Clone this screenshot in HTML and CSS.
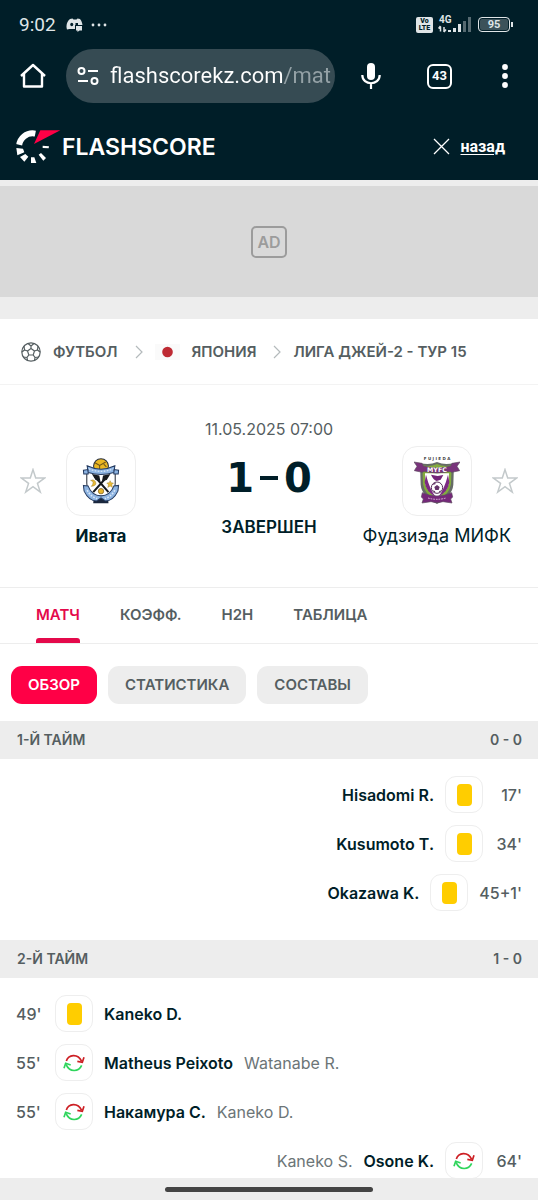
FILE: index.html
```html
<!doctype html>
<html lang="ru">
	<head>
		<meta charset="utf-8">
		<title>Ивата - Фудзиэда МИФК</title>
		<meta name="viewport" content="width=device-width, initial-scale=1.0">
		<link rel="stylesheet" href="styles.css">
	</head>
	<body>
	<svg class="sprite" aria-hidden="true">
		<symbol id="star" viewBox="0 0 24 24">
			<path d="M12 1.5l2.5 7.8h8.2l-6.6 4.9 2.6 8L12 17.3l-6.7 4.900 2.600-8-6.600-4.900h8.200z" fill="none" stroke="#c3c9cb" stroke-width="1.400"/>
		</symbol>
		<symbol id="arrow" viewBox="0 0 8 14">
			<path d="M1 1l6 6-6 6" fill="none" stroke="#b4babc" stroke-width="1.2"/>
		</symbol>
		<symbol id="sub" viewBox="0 0 64 54">
			<g fill="none" stroke-width="5">
				<path d="M9 21C15 2 43-3 55 22" stroke="#cd1f24"/>
				<path d="M42 22l15 3 5-15" stroke="#cd1f24"/>
				<path d="M55 34C46 54 19 56 8 31" stroke="#2fd55c"/>
				<path d="M2 43l5-15 15 5" stroke="#2fd55c"/>
			</g>
		</symbol>
	</svg>

	<!--статус-бар-->
	<div class="status">
		<span class="clock">9:02</span>
		<svg width="17" height="14" viewBox="0 0 34 28">
			<path d="M8 2l5-1 2 2h6l2-2 5 1c4 5 5 10 5 14h-8l-4 6H7l-5 1C-1 14 3 6 8 2z" fill="#dfe5e7"/>
			<ellipse cx="11.500" cy="13" rx="3" ry="3.500" fill="#001e28"/>
			<path d="M19 10h5v5h-5z" fill="#001e28"/>
			<path d="M18 14h16v12h-7l-5 2-4-2z" fill="#001e28"/>
			<path d="M20 16h12v9h-5l-4 3v-3h-3z" fill="#dfe5e7"/>
		</svg>
		<svg width="18" height="4" viewBox="0 0 18 4" fill="#dfe5e7"><circle cx="3" cy="2" r="1.400"/><circle cx="9" cy="2" r="1.400"/><circle cx="15" cy="2" r="1.400"/></svg>
		<span class="volte">Vo<br>LTE</span>
		<div class="net">
			<span>4G</span>
			<svg width="33" height="16" viewBox="0 0 33 16" fill="#dfe5e7">
				<path d="M2.500 9.500v5M.5 11.500l2-2.500M6 10v5M8 12.500L6 15" stroke="#dfe5e7" stroke-width="1.500"/>
				<path d="M10 13h3v2h-3zM15 11h3v4h-3zM20 7h3v8h-3z"/>
				<path d="M25 4h3v11h-3zM30 0h3v15h-3z" fill="#566a71"/>
			</svg>
		</div>
		<span class="battery">95</span>
	</div>

	<!--панель браузера-->
	<div class="toolbar">
		<button aria-label="Домой">
			<svg width="26" height="26" viewBox="0 0 26 26"><path d="M1 13L13 2l12 11M4 11v12.500h18V11" fill="none" stroke="#fff" stroke-width="2.400" stroke-linejoin="round"/></svg>
		</button>
		<div class="address">
			<svg width="22" height="18" viewBox="0 0 22 18" fill="none" stroke="#fff" stroke-width="2"><circle cx="4.500" cy="4" r="3"/><path d="M11 4h10M1 14h10"/><circle cx="17.500" cy="14" r="3"/></svg>
			<input type="text" value="flashscorekz.com/mat" aria-label="Адрес">
		</div>
		<button aria-label="Голосовой поиск">
			<svg width="20" height="28" viewBox="0 0 20 28"><rect x="6" y="1" width="8" height="17" rx="4" fill="#fff"/><path d="M1.300 13c0 11 17.400 11 17.400 0M10 21v6" fill="none" stroke="#fff" stroke-width="2.200"/></svg>
		</button>
		<button class="count" aria-label="Вкладки">43</button>
		<button aria-label="Меню">
			<svg width="8" height="24" viewBox="0 0 8 24" fill="#fff"><circle cx="4" cy="3" r="2.900"/><circle cx="4" cy="12" r="2.900"/><circle cx="4" cy="21" r="2.900"/></svg>
		</button>
	</div>

	<header class="header">
		<a href="#" class="logo">
			<svg width="45" height="34" viewBox="0 0 135 102">
				<circle cx="50" cy="51" r="41" fill="none" stroke="#fff" stroke-width="18" pathLength="360" stroke-dasharray="95 265" transform="rotate(186 50 51)"/>
				<path d="M0 42L24 48 24 54 1 53z" fill="#001e28"/>
				<path d="M1 54l20 2 4 11-21 9zM12 81l16-9 9 8-12 15zM45 82h10l6 17H45zM68 74l7-5 15 15-8 8zM80 47l19 2-1 6-18-1z" fill="#fff"/>
				<path d="M62 0h73L55 43 72 0z" fill="#001e28"/>
				<path d="M73 1h60L54 42z" fill="#ff0046"/>
			</svg>
			<span>FLASHSCORE</span>
		</a>
		<a href="#" class="back">
			<svg width="17" height="17" viewBox="0 0 17 17"><path d="M1 1l15 15M16 1L1 16" stroke="#fff" stroke-width="1.300"/></svg>
			<span>назад</span>
		</a>
	</header>

	<main>
		<div class="banner"><span>AD</span></div>

		<nav class="crumbs">
			<svg width="20" height="20" viewBox="0 0 20 20" fill="none" stroke="#555e61" stroke-width="1.200"><circle cx="10" cy="10" r="9.200"/><path d="M10 6.500l3.500 2.500-1.300 4H7.800L6.500 9zM10 6.500V4l3-2.500M10 4L7 1.500M13.500 9l3-1 2.500 2M16.500 8l.5-4M12.200 13l1.800 2.500-.5 3M14 15.500l4-.5M7.800 13L6 15.500l.5 3M6 15.500L2 15M6.500 9l-3-1L1 10M3.500 8L3 4"/></svg>
			<a href="#">ФУТБОЛ</a>
			<svg width="8" height="14"><use href="#arrow"/></svg>
			<svg class="flag" width="25" height="16" viewBox="0 0 25 16"><path d="M0 0h25v16H0z" fill="#fafafa"/><circle cx="12.500" cy="8" r="5.300" fill="#be2a33"/></svg>
			<a href="#">ЯПОНИЯ</a>
			<svg width="8" height="14"><use href="#arrow"/></svg>
			<a href="#">ЛИГА ДЖЕЙ-2 - ТУР 15</a>
		</nav>

		<section class="match">
			<div class="team">
				<div class="crest">
					<button aria-label="В избранное"><svg width="26" height="26"><use href="#star"/></svg></button>
					<a href="#" class="badge" aria-label="Ивата">
						<svg width="38" height="46" viewBox="0 0 108 136">
							<circle cx="54" cy="24" r="22" fill="#eab722" stroke="#283040" stroke-width="3"/>
							<path d="M36 14l14 8 18-10M50 22v16M70 26l-8-8" stroke="#6d5318" stroke-width="3" fill="none"/>
							<path d="M12 40h84v34q0 34-42 48-42-14-42-48z" fill="#fff" stroke="#252b36" stroke-width="3"/>
							<path d="M13 23q41 20 82 0l-3 20q-38 12-76 0zM2 36l14-2v13H3zM92 34l14 2-1 11H92z" fill="#8db4e2" stroke="#253b60" stroke-width="3"/>
							<path d="M18 32q36 15 72 0" stroke="#d5e5f8" stroke-width="4" fill="none" stroke-dasharray="5 4"/>
							<path d="M35 54l41 47M73 54l-42 47" stroke="#15191e" stroke-width="6"/>
							<path d="M27 47l22 5 3 16-14-3zM82 47l-22 5-3 16 14-3z" fill="#15191e"/>
							<path d="M23 66q14 5 2 18 18-2 13-14-5-8-15-4zM81 67l3 6 7 1-5 5 2 8-7-4-7 4 2-8-5-5 7-1z" fill="#e8ba37" stroke="#7b6425"/>
							<circle cx="54" cy="98" r="8" fill="#e6b52d" stroke="#78591c" stroke-width="2"/>
							<path d="M33 111l42 0 1 23H31z" fill="#19263c"/>
							<path d="M2 81l14 2q10 27 38 29 28-2 38-29l14-2-2 17q-14 29-37 29l-13-9-13 9Q18 127 4 98z" fill="#8db4e2" stroke="#253b60" stroke-width="3"/>
							<path d="M13 95q11 20 30 25M95 95q-11 20-30 25" stroke="#d9e7f8" stroke-width="5" stroke-dasharray="5 4" fill="none"/>
						</svg>
					</a>
				</div>
				<a href="#" class="name winner">Ивата</a>
			</div>

			<div class="result">
				<time>11.05.2025 07:00</time>
				<div class="score"><span>1</span><i></i><span>0</span></div>
				<strong>ЗАВЕРШЕН</strong>
			</div>

			<div class="team away">
				<div class="crest">
					<a href="#" class="badge" aria-label="Фудзиэда МИФК">
						<svg width="46" height="48" viewBox="0 0 138 142">
							<text x="69" y="9" text-anchor="middle" class="crest-top">F U J I E D A</text>
							<path d="M18 17q28 8 51-3 23 11 51 3l-2 65q-3 34-49 58-46-24-49-58z" fill="#666b67"/>
							<path d="M25 24q25 5 44-4 19 9 44 4l-2 56q-4 31-42 51-38-20-42-51z" fill="#83ac3c"/>
							<path d="M33 48h72l-1 32q-6 26-35 40-29-14-35-40z" fill="#fff"/>
							<path d="M36 52q11 44 29 66-28-12-33-43zM102 52q-11 44-29 66 28-12 33-43z" fill="#7d2a83"/>
							<path d="M51 52l20 4 17-3-8 14-12 4q-10-3-17-19z" fill="#722477"/>
							<circle cx="69" cy="91" r="17" fill="#fff" stroke="#57305b" stroke-width="3"/>
							<path d="M69 83l8 6-3 9H64l-3-9zM55 83l7-7 4 4M76 79l7 5M55 99l8 2 1 6M74 107l2-6 8-2" fill="#633368"/>
							<path d="M0 14l24 4 4 8q41 12 82 0l4-8 24-4-9 13 8 13-24 5q-4-3-10-2-34 8-68 0-6-1-10 2L1 40l8-13z" fill="#79337b" stroke="#5d4b60" stroke-width="2"/>
							<text x="69" y="45" text-anchor="middle" class="crest-name">MYFC</text>
							<path d="M25 106q44 20 88 0l3 13-6 6 4 12-27-4q-18 6-36 0l-27 4 4-12-6-6z" fill="#752879" stroke="#5d4b60" stroke-width="2"/>
							<path d="M42 122q27 8 54 0" stroke="#dcb9dd" stroke-width="3" stroke-dasharray="5 3" fill="none"/>
						</svg>
					</a>
					<button aria-label="В избранное"><svg width="26" height="26"><use href="#star"/></svg></button>
				</div>
				<a href="#" class="name">Фудзиэда МИФК</a>
			</div>
		</section>

		<nav class="tabs">
			<a href="#" class="active">МАТЧ</a>
			<a href="#">КОЭФФ.</a>
			<a href="#">H2H</a>
			<a href="#">ТАБЛИЦА</a>
		</nav>

		<div class="filters">
			<button class="active">ОБЗОР</button>
			<button>СТАТИСТИКА</button>
			<button>СОСТАВЫ</button>
		</div>

		<h2><span>1-Й ТАЙМ</span><span>0 - 0</span></h2>
		<ul class="events">
			<li class="right"><span class="min">17'</span><span class="icon"><i class="card"></i></span><a href="#">Hisadomi R.</a></li>
			<li class="right"><span class="min">34'</span><span class="icon"><i class="card"></i></span><a href="#">Kusumoto T.</a></li>
			<li class="right"><span class="min">45+1'</span><span class="icon"><i class="card"></i></span><a href="#">Okazawa K.</a></li>
		</ul>

		<h2><span>2-Й ТАЙМ</span><span>1 - 0</span></h2>
		<ul class="events">
			<li><span class="min">49'</span><span class="icon"><i class="card"></i></span><a href="#">Kaneko D.</a></li>
			<li><span class="min">55'</span><span class="icon"><svg width="22" height="18"><use href="#sub"/></svg></span><a href="#">Matheus Peixoto</a><a href="#" class="out">Watanabe R.</a></li>
			<li><span class="min">55'</span><span class="icon"><svg width="22" height="18"><use href="#sub"/></svg></span><a href="#">Накамура С.</a><a href="#" class="out">Kaneko D.</a></li>
			<li class="right"><span class="min">64'</span><span class="icon"><svg width="22" height="18"><use href="#sub"/></svg></span><a href="#">Osone K.</a><a href="#" class="out">Kaneko S.</a></li>
		</ul>
	</main>

	<div class="gesture"><span></span></div>
	</body>
</html>
```

FILE: styles.css
```css
*{margin: 0;padding: 0;box-sizing: border-box;}
ul li{list-style: none;}
a{color: inherit;text-decoration: none;}
button{border: 0;background: none;font: inherit;color: inherit;cursor: pointer;}
svg{display: block;flex: none;}
.sprite{position: absolute;width: 0;height: 0;}

body{
	display: flex;
	flex-direction: column;
	height: 100vh;
	overflow: hidden;
	background: #fff;
	color: #001e28;
	font: 500 16px/20px Inter, "Noto Sans", sans-serif;
}

/* status */
.status{
	display: flex;
	align-items: center;
	height: 49px;
	flex: none;
	padding: 0 28px 0 19px;
	background: #001e28;
	color: #dfe5e7;
	font-family: Roboto, sans-serif;
}
.clock{
	margin-right: 10px;
	font-size: 19px;
	font-weight: 400;
}
.status svg + svg{margin-left: 7px;}
.volte{
	margin-left: auto;
	width: 17px;
	padding: 1px 0;
	border-radius: 2px;
	background: #dfe5e7;
	color: #001e28;
	font-size: 7px;
	font-weight: 900;
	line-height: 7px;
	text-align: center;
}
.net{
	position: relative;
	margin: 0 7px 0 5px;
}
.net span{
	position: absolute;
	top: -2px;
	left: 1px;
	font-size: 10px;
	font-weight: 700;
	line-height: 10px;
}
.battery{
	position: relative;
	width: 32px;
	height: 15px;
	border: 1px solid #dfe5e7;
	border-radius: 4px;
	background: #3c525a;
	box-shadow: inset 0 0 0 1px #001e28;
	font-size: 11px;
	font-weight: 700;
	line-height: 13px;
	text-align: center;
}
.battery:after{
	content: "";
	position: absolute;
	top: 4px;
	right: -4px;
	width: 2px;
	height: 5px;
	background: #dfe5e7;
}

/* toolbar */
.toolbar{
	display: flex;
	align-items: center;
	flex: none;
	padding: 0 29px 10px 20px;
	background: #001e28;
	color: #fff;
	font-family: Roboto, sans-serif;
}
.address{
	display: flex;
	align-items: center;
	flex: 1;
	min-width: 0;
	height: 54px;
	margin: 0 26px 0 20px;
	padding: 0 4px 0 11px;
	border-radius: 27px;
	background: #364b53;
}
.address input{
	flex: 1;
	min-width: 0;
	height: 30px;
	margin-left: 11px;
	border: 0;
	outline: 0;
	background: linear-gradient(to right, #fff 173px, #94a1a6 173px);
	-webkit-background-clip: text;
	background-clip: text;
	color: transparent;
	font: 400 22px/30px Roboto, sans-serif;
}
.count{
	width: 25px;
	height: 25px;
	margin: 0 49px 0 46px;
	border: 2px solid #fff;
	border-radius: 6px;
	font-size: 13px;
	font-weight: 700;
	line-height: 20px;
}

/* header */
.header{
	display: flex;
	align-items: center;
	justify-content: space-between;
	flex: none;
	height: 67px;
	padding: 0 33px 0 16px;
	background: #001e28;
	color: #fff;
}
.logo,.back{display: flex;align-items: center;}
.logo span{
	margin-left: 1px;
	font-size: 23px;
	font-weight: 600;
}
.back span{
	margin-left: 11px;
	font: 700 16px/20px Roboto, sans-serif;
	text-decoration: underline;
	text-underline-offset: 2px;
}

main{
	flex: 1;
	min-height: 0;
	overflow: hidden;
}
.banner{
	display: flex;
	align-items: center;
	justify-content: center;
	height: 139px;
	border: solid #ededed;
	border-width: 6px 0 22px;
	background: #d9d9d9;
}
.banner span{
	width: 36px;
	height: 32px;
	border: 2px solid #9c9c9c;
	border-radius: 5px;
	color: #9c9c9c;
	font-weight: 600;
	line-height: 28px;
	text-align: center;
}

.crumbs{
	display: flex;
	align-items: center;
	height: 66px;
	padding: 0 21px;
	border-bottom: 1px solid #f3f3f3;
	color: #555e61;
	font-size: 15px;
	font-weight: 600;
	white-space: nowrap;
}
.crumbs a{margin: 0 17px 0 12px;}
.crumbs .flag{margin-left: 12px;}

/* match */
.match{
	display: flex;
	justify-content: space-between;
	height: 203px;
	padding: 34px 20px 0;
	border-bottom: 1px solid #ededed;
}
.team{
	width: 162px;
	padding-top: 27px;
}
.crest{
	display: flex;
	align-items: center;
	gap: 20px;
}
.away .crest{justify-content: flex-end;}
.badge{
	display: flex;
	align-items: center;
	justify-content: center;
	width: 70px;
	height: 70px;
	border: 1px solid #eee;
	border-radius: 15px;
}
.crest-top{font: 700 12px "DejaVu Sans", sans-serif;fill: #444;}
.crest-name{font: 700 19px "DejaVu Sans", sans-serif;fill: #fff;}
.name{
	display: block;
	margin-top: 10px;
	font-size: 18px;
	font-weight: 400;
	text-align: center;
	white-space: nowrap;
}
.winner{font-size: 17px;font-weight: 700;}
.away .name{margin-right: 7px;text-align: right;}
.result{
	text-align: center;
	white-space: nowrap;
}
.result time{
	display: block;
	color: #555e61;
	font-weight: 400;
}
.score{
	display: flex;
	align-items: center;
	justify-content: center;
	gap: 6px;
	height: 48px;
	margin-top: 15px;
	font: 700 40px/48px "DejaVu Sans", sans-serif;
}
.score i{
	width: 18px;
	height: 4px;
	background: #001e28;
}
.result strong{
	display: block;
	margin-top: 15px;
	font-size: 17px;
	font-weight: 600;
}

/* tabs */
.tabs{
	display: flex;
	gap: 40px;
	height: 56px;
	padding: 0 36px;
	border-bottom: 1px solid #ededed;
	color: #555e61;
	font-size: 15px;
	font-weight: 600;
	line-height: 54px;
}
.tabs a{position: relative;}
.tabs .active{color: #e4094b;}
.tabs .active:after{
	content: "";
	position: absolute;
	right: 0;
	bottom: 0;
	left: 0;
	height: 5px;
	border-radius: 3px 3px 0 0;
	background: #e4094b;
}
.filters{
	display: flex;
	gap: 11px;
	padding: 22px 11px 17px;
	color: #555e61;
	font-size: 15px;
	font-weight: 600;
}
.filters button{
	height: 38px;
	padding: 0 17px;
	border-radius: 11px;
	background: #ededed;
}
.filters .active{
	background: #ff0046;
	color: #fff;
}

/* events */
h2{
	display: flex;
	align-items: center;
	justify-content: space-between;
	height: 38px;
	padding: 0 16px 0 17px;
	background: #ededed;
	color: #555e61;
	font-size: 14px;
	font-weight: 600;
}
.events{padding: 17px 16px 29px;}
.events li{
	display: flex;
	align-items: center;
	margin-bottom: 12px;
	white-space: nowrap;
}
.events li:last-child{margin-bottom: 0;}
.events .right{flex-direction: row-reverse;}
.events a{
	margin: 0 11px;
	font-weight: 600;
}
.events .out{
	margin: 0;
	color: #6c7577;
	font-weight: 400;
}
.min{
	min-width: 39px;
	color: #555e61;
}
.right .min{
	margin-left: 11px;
	min-width: 28px;
	text-align: right;
}
.icon{
	display: flex;
	align-items: center;
	justify-content: center;
	width: 38px;
	height: 37px;
	border: 1px solid #eee;
	border-radius: 11px;
}
.card{
	width: 15px;
	height: 22px;
	border-radius: 4px;
	background: #ffcd00;
}

.gesture{
	display: flex;
	align-items: center;
	justify-content: center;
	flex: none;
	height: 22px;
	background: #ededed;
}
.gesture span{
	width: 208px;
	height: 5px;
	border-radius: 3px;
	background: #444;
}
```
